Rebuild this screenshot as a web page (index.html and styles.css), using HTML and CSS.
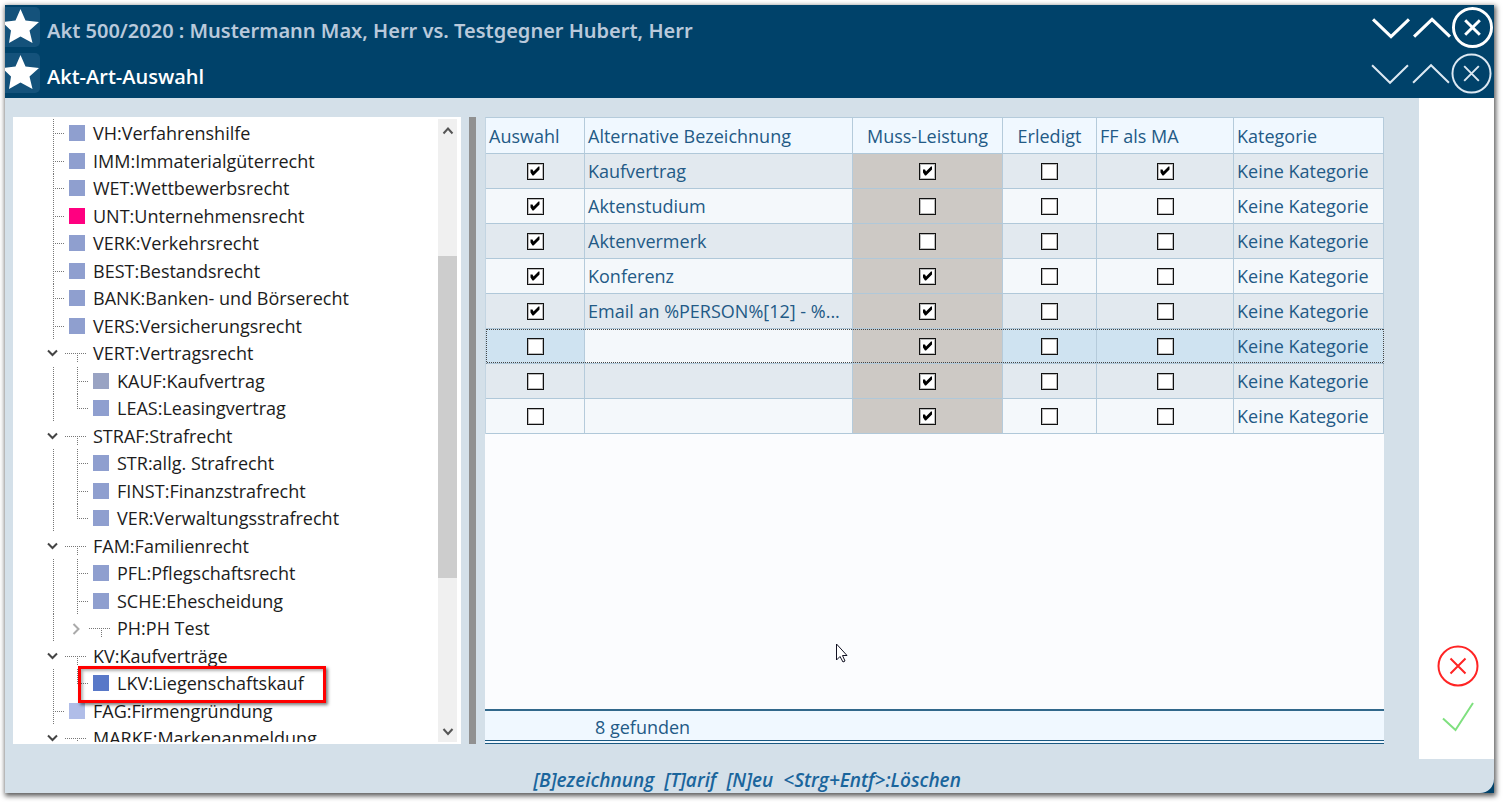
FILE: index.html
```html
<!DOCTYPE html>
<html lang="de">
<head>
<meta charset="utf-8">
<title>Akt-Art-Auswahl</title>
<link rel="stylesheet" href="styles.css">
</head>
<body>
<svg class="sprite" aria-hidden="true">
  <symbol id="star" viewBox="0 0 36 40"><path d="M15.500 2l5 11.500L34 15l-9.500 8.500L27.500 36l-12-6.500L4 36l2-12.500L-3 15l13.500-1.500z"/></symbol>
  <symbol id="down" viewBox="0 0 40 40"><path d="M3 12l17.500 17L38 12"/></symbol>
  <symbol id="up" viewBox="0 0 40 40"><path d="M3 29l17.500-17L38 29"/></symbol>
  <symbol id="close" viewBox="0 0 42 42"><circle cx="21" cy="21" r="19.500"/><path d="M13.500 13.500l15 15M28.500 13.500l-15 15"/></symbol>
  <symbol id="v" viewBox="0 0 24 28"><path d="M12.500 0v28"/></symbol>
  <symbol id="fork" viewBox="0 0 24 28"><path d="M12.500 0v28M14 14.500h12"/></symbol>
  <symbol id="end" viewBox="0 0 24 28"><path d="M12.500 0v15M14 14.500h12"/></symbol>
  <symbol id="tee" viewBox="0 0 24 28"><path d="M0 14.500h21M12.500 16v7"/></symbol>
  <symbol id="open" viewBox="0 0 24 28"><path d="M7 11.500l4.500 4.500L16 11.500"/></symbol>
  <symbol id="shut" viewBox="0 0 24 28"><path d="M8.500 10l5 5-5 5"/></symbol>
</svg>
<div class="window">
  <header class="titles">
    <div class="titlebar parent-title">
      <span class="badge"><svg><use href="#star"/></svg></span>
      <h2>Akt 500/2020 : Mustermann Max, Herr vs. Testgegner Hubert, Herr</h2>
      <button aria-label="Nach unten"><svg><use href="#down"/></svg></button>
      <button aria-label="Nach oben"><svg><use href="#up"/></svg></button>
      <button aria-label="Akt schließen"><svg><use href="#close"/></svg></button>
    </div>
    <div class="titlebar dialog-title">
      <span class="badge"><svg><use href="#star"/></svg></span>
      <h1>Akt-Art-Auswahl</h1>
      <button aria-label="Nach unten"><svg><use href="#down"/></svg></button>
      <button aria-label="Nach oben"><svg><use href="#up"/></svg></button>
      <button aria-label="Auswahl schließen"><svg><use href="#close"/></svg></button>
    </div>
  </header>
  <div class="content">
    <main class="work">
      <section class="tree-panel">
        <ul class="tree" role="tree">
          <li role="treeitem"><svg><use href="#fork"/></svg><i></i><span>VH:Verfahrenshilfe</span></li>
          <li role="treeitem"><svg><use href="#fork"/></svg><i></i><span>IMM:Immaterialgüterrecht</span></li>
          <li role="treeitem"><svg><use href="#fork"/></svg><i></i><span>WET:Wettbewerbsrecht</span></li>
          <li role="treeitem"><svg><use href="#fork"/></svg><i class="pink"></i><span>UNT:Unternehmensrecht</span></li>
          <li role="treeitem"><svg><use href="#fork"/></svg><i></i><span>VERK:Verkehrsrecht</span></li>
          <li role="treeitem"><svg><use href="#fork"/></svg><i></i><span>BEST:Bestandsrecht</span></li>
          <li role="treeitem"><svg><use href="#fork"/></svg><i></i><span>BANK:Banken- und Börserecht</span></li>
          <li role="treeitem"><svg><use href="#fork"/></svg><i></i><span>VERS:Versicherungsrecht</span></li>
          <li role="treeitem"><svg class="chevron"><use href="#open"/></svg><svg><use href="#tee"/></svg><span>VERT:Vertragsrecht</span></li>
          <li role="treeitem"><svg><use href="#v"/></svg><svg><use href="#fork"/></svg><i class="gray"></i><span>KAUF:Kaufvertrag</span></li>
          <li role="treeitem"><svg><use href="#v"/></svg><svg><use href="#end"/></svg><i></i><span>LEAS:Leasingvertrag</span></li>
          <li role="treeitem"><svg class="chevron"><use href="#open"/></svg><svg><use href="#tee"/></svg><span>STRAF:Strafrecht</span></li>
          <li role="treeitem"><svg><use href="#v"/></svg><svg><use href="#fork"/></svg><i></i><span>STR:allg. Strafrecht</span></li>
          <li role="treeitem"><svg><use href="#v"/></svg><svg><use href="#fork"/></svg><i></i><span>FINST:Finanzstrafrecht</span></li>
          <li role="treeitem"><svg><use href="#v"/></svg><svg><use href="#end"/></svg><i></i><span>VER:Verwaltungsstrafrecht</span></li>
          <li role="treeitem"><svg class="chevron"><use href="#open"/></svg><svg><use href="#tee"/></svg><span>FAM:Familienrecht</span></li>
          <li role="treeitem"><svg><use href="#v"/></svg><svg><use href="#fork"/></svg><i></i><span>PFL:Pflegschaftsrecht</span></li>
          <li role="treeitem"><svg><use href="#v"/></svg><svg><use href="#fork"/></svg><i></i><span>SCHE:Ehescheidung</span></li>
          <li role="treeitem"><svg><use href="#v"/></svg><svg class="chevron closed"><use href="#shut"/></svg><svg><use href="#tee"/></svg><span>PH:PH Test</span></li>
          <li role="treeitem"><svg class="chevron"><use href="#open"/></svg><svg><use href="#tee"/></svg><span>KV:Kaufverträge</span></li>
          <li role="treeitem" class="marked"><svg><use href="#v"/></svg><svg><use href="#end"/></svg><i class="strong"></i><span>LKV:Liegenschaftskauf</span></li>
          <li role="treeitem"><svg><use href="#fork"/></svg><i class="light"></i><span>FAG:Firmengründung</span></li>
          <li role="treeitem"><svg class="chevron"><use href="#open"/></svg><svg><use href="#tee"/></svg><span>MARKE:Markenanmeldung</span></li>
        </ul>
        <div class="scrollbar">
          <button aria-label="Nach oben blättern"><svg viewBox="0 0 19 24"><path d="M5.500 14.500l4.500-5 4.500 5"/></svg></button>
          <div class="track"><div class="thumb"></div></div>
          <button aria-label="Nach unten blättern"><svg viewBox="0 0 19 24"><path d="M5.500 11l4.500 5 4.500-5"/></svg></button>
        </div>
      </section>
      <div class="splitter"></div>
      <section class="grid-panel">
        <table>
          <colgroup><col class="c-select"><col><col class="c-must"><col class="c-done"><col class="c-ff"><col class="c-cat"></colgroup>
          <thead>
            <tr><th>Auswahl</th><th>Alternative Bezeichnung</th><th class="mid">Muss-Leistung</th><th class="mid">Erledigt</th><th>FF als MA</th><th>Kategorie</th></tr>
          </thead>
          <tbody>
            <tr><td class="mid"><input type="checkbox" aria-label="Auswahl" checked></td><td>Kaufvertrag</td><td class="mid must"><input type="checkbox" aria-label="Muss-Leistung" checked></td><td class="mid"><input type="checkbox" aria-label="Erledigt"></td><td class="mid"><input type="checkbox" aria-label="FF als MA" checked></td><td>Keine Kategorie</td></tr>
            <tr><td class="mid"><input type="checkbox" aria-label="Auswahl" checked></td><td>Aktenstudium</td><td class="mid must"><input type="checkbox" aria-label="Muss-Leistung"></td><td class="mid"><input type="checkbox" aria-label="Erledigt"></td><td class="mid"><input type="checkbox" aria-label="FF als MA"></td><td>Keine Kategorie</td></tr>
            <tr><td class="mid"><input type="checkbox" aria-label="Auswahl" checked></td><td>Aktenvermerk</td><td class="mid must"><input type="checkbox" aria-label="Muss-Leistung"></td><td class="mid"><input type="checkbox" aria-label="Erledigt"></td><td class="mid"><input type="checkbox" aria-label="FF als MA"></td><td>Keine Kategorie</td></tr>
            <tr><td class="mid"><input type="checkbox" aria-label="Auswahl" checked></td><td>Konferenz</td><td class="mid must"><input type="checkbox" aria-label="Muss-Leistung" checked></td><td class="mid"><input type="checkbox" aria-label="Erledigt"></td><td class="mid"><input type="checkbox" aria-label="FF als MA"></td><td>Keine Kategorie</td></tr>
            <tr><td class="mid"><input type="checkbox" aria-label="Auswahl" checked></td><td>Email an %PERSON%[12] - %...</td><td class="mid must"><input type="checkbox" aria-label="Muss-Leistung" checked></td><td class="mid"><input type="checkbox" aria-label="Erledigt"></td><td class="mid"><input type="checkbox" aria-label="FF als MA"></td><td>Keine Kategorie</td></tr>
            <tr class="current"><td class="mid"><input type="checkbox" aria-label="Auswahl"></td><td class="editing"></td><td class="mid must"><input type="checkbox" aria-label="Muss-Leistung" checked></td><td class="mid"><input type="checkbox" aria-label="Erledigt"></td><td class="mid"><input type="checkbox" aria-label="FF als MA"></td><td>Keine Kategorie</td></tr>
            <tr><td class="mid"><input type="checkbox" aria-label="Auswahl"></td><td></td><td class="mid must"><input type="checkbox" aria-label="Muss-Leistung" checked></td><td class="mid"><input type="checkbox" aria-label="Erledigt"></td><td class="mid"><input type="checkbox" aria-label="FF als MA"></td><td>Keine Kategorie</td></tr>
            <tr><td class="mid"><input type="checkbox" aria-label="Auswahl"></td><td></td><td class="mid must"><input type="checkbox" aria-label="Muss-Leistung" checked></td><td class="mid"><input type="checkbox" aria-label="Erledigt"></td><td class="mid"><input type="checkbox" aria-label="FF als MA"></td><td>Keine Kategorie</td></tr>
          </tbody>
        </table>
        <div class="found">8 gefunden</div>
        <svg class="pointer" viewBox="0 0 12 20"><path d="M.5 1v16l3.500-3.500 3 5.500 2-1-2.500-5.500h4.500z"/></svg>
      </section>
    </main>
    <aside class="actions">
      <button class="cancel" aria-label="Abbrechen"><svg><use href="#close"/></svg></button>
      <button class="confirm" aria-label="Übernehmen"><svg viewBox="0 0 42 42"><path d="M6 21.500l12.500 11.500L36 6"/></svg></button>
    </aside>
    <footer class="hints"><span>[B]ezeichnung</span><span>[T]arif</span><span>[N]eu</span><span>&lt;Strg+Entf&gt;:Löschen</span></footer>
  </div>
</div>
</body>
</html>
```
FILE: styles.css
```css
*, ::before, ::after { box-sizing: border-box; }

body {
  margin: 0;
  height: 100vh;
  padding: 5px 9px 9px 5px;
  overflow: hidden;
  background: #fff;
  font: 18px/24px "Open Sans", "Noto Sans", sans-serif;
  color: #1c1c1c;
}

.sprite { display: none; }

svg { display: block; flex: none; fill: none; overflow: visible; }

button {
  padding: 0;
  border: 0;
  background: none;
  color: inherit;
}

.window {
  display: flex;
  flex-direction: column;
  height: 100%;
  background: #00426a;
  box-shadow: 1px 2px 5px 1px rgba(0, 0, 0, .65);
}

.titles { flex: none; padding-bottom: 1px; color: #fff; }

.titlebar {
  display: flex;
  align-items: flex-start;
  height: 46px;
  padding: 2px 1px 0 0;
}

.titlebar h1,
.titlebar h2 {
  flex: 1;
  margin: 0 0 0 7px;
  padding-top: 12px;
  font-size: 20px;
  font-weight: 600;
  white-space: nowrap;
}

.parent-title h2 {
  color: #b9c9db;
  font-family: "Noto Sans", "Open Sans", sans-serif;
}

.badge {
  width: 35px;
  height: 40px;
  border-radius: 0 5px 5px 0;
  background: #14527b;
  overflow: hidden;
}

.badge svg { width: 36px; height: 40px; fill: #fff; }

.titlebar button svg { width: 41px; height: 41px; stroke: #fff; stroke-width: 3px; }
.dialog-title button svg { stroke: #dce8f2; stroke-width: 2px; }
.dialog-title { padding-right: 2px; }

.content {
  flex: 1;
  min-height: 0;
  display: grid;
  grid-template: minmax(0, 1fr) 34px / minmax(0, 1fr) 75px;
  background: #d4e0e9;
  border-bottom-right-radius: 14px;
}

.work {
  display: flex;
  padding: 19px 35px 15px 8px;
  min-height: 0;
}

.tree-panel {
  position: relative;
  flex: 0 0 448px;
  display: flex;
  padding: 2px 4px 2px 28px;
  background: #fff;
}

.tree {
  flex: 1;
  margin: 0;
  padding: 0;
  list-style: none;
  overflow: hidden;
}

.tree li {
  position: relative;
  display: flex;
  align-items: center;
  height: 28px;
  white-space: nowrap;
}

.tree li:nth-child(even) { height: 27px; }

.tree svg {
  width: 24px;
  height: 28px;
  stroke: #777;
  stroke-dasharray: 1 1;
}

.tree .chevron { stroke: #444; stroke-width: 2px; stroke-dasharray: none; }
.tree .closed { stroke: #aaa; }

.tree i {
  flex: none;
  width: 16px;
  height: 16px;
  margin: 0 4px;
  background: #8f9fcf;
}

.tree .pink { background: #ff0080; }
.tree .gray { background: #99a3c3; }
.tree .strong { background: #5878c8; }
.tree .light { background: #b0bde8; }

.tree span { margin-left: 4px; }

.marked::after {
  content: "";
  position: absolute;
  z-index: 1;
  top: -3px;
  left: 37px;
  width: 248px;
  height: 37px;
  border: 3px solid #f00;
  box-shadow: 2px 2px 3px rgba(0, 0, 0, .5), inset 2px 2px 3px rgba(0, 0, 0, .3);
}

.scrollbar {
  flex: none;
  display: flex;
  flex-direction: column;
  width: 19px;
  background: #f0f0f0;
}

.scrollbar svg { width: 19px; height: 24px; stroke: #555; stroke-width: 2px; }
.track { flex: 1; display: flex; flex-direction: column; }
.thumb { height: 56%; margin-top: 113px; background: #cdcdcd; }

.splitter { flex: none; width: 7px; margin: 0 9px 0 8px; background: #919191; }

.grid-panel {
  position: relative;
  flex: 1;
  min-width: 0;
  display: flex;
  flex-direction: column;
  justify-content: space-between;
  background: #fbfcfe;
  color: #235a86;
}

table {
  width: 100%;
  table-layout: fixed;
  border-spacing: 0;
  border-top: 1px solid #b5cbdb;
  border-left: 1px solid #c3d5e2;
}

.c-select { width: 99px; }
.c-must { width: 150px; }
.c-done { width: 94px; }
.c-ff { width: 137px; }
.c-cat { width: 150px; }

th, td {
  height: 35px;
  padding: 0 0 0 3px;
  border-right: 1px solid #b5cbdb;
  border-bottom: 1px solid #b0c8d9;
  font-weight: 400;
  text-align: left;
  white-space: nowrap;
  overflow: hidden;
}

th { height: 36px; background: #f0f8ff; }
td { background: #f4f8fb; }
tr:nth-child(odd) td { background: #e2e9ef; }
th.mid, td.mid { padding: 0; text-align: center; }

tbody tr .must.must { background-color: #cdc9c5; }

.current td { background-color: #cfe3f1; }
.current .editing { background-color: #f4f8fb; }

.current td,
.current .editing,
tbody .current .must.must {
  background-image:
    repeating-linear-gradient(90deg, #444 0 1px, transparent 1px 2px),
    repeating-linear-gradient(90deg, #444 0 1px, transparent 1px 2px);
  background-size: 100% 1px;
  background-position: 0 0, 0 100%;
  background-repeat: no-repeat;
}

.current td:first-child { border-left: 1px dotted #444; }
.current td:last-child { border-right: 1px dotted #444; }

input[type="checkbox"] {
  appearance: none;
  display: block;
  width: 17px;
  height: 17px;
  margin: 0 auto;
  border: 1px solid #111;
  background: #fff;
  box-shadow: inset 0 0 0 1px #bbb;
}

input:checked::before {
  content: "";
  display: block;
  width: 15px;
  height: 15px;
  background: #000;
  clip-path: polygon(3px 6px, 5px 6px, 6px 8px, 11px 3px, 12px 3px, 12px 6px, 6px 12px, 5px 12px, 3px 9px);
}

.found {
  height: 35px;
  padding: 4px 0 0 110px;
  border-top: 2px solid #31688b;
  border-bottom: 4px double #1c5a82;
  background: #f0f8ff;
}

.pointer {
  position: absolute;
  left: 39%;
  bottom: 81px;
  width: 12px;
  height: 20px;
  fill: #fff;
  stroke: #112;
}

.actions {
  display: flex;
  flex-direction: column;
  align-items: center;
  justify-content: flex-end;
  gap: 10px;
  padding: 0 0 20px 3px;
  background: #fff;
}

.actions svg { width: 42px; height: 42px; stroke-width: 2px; }
.cancel svg { stroke: #ff2424; }
.confirm svg { stroke: #7fe07f; }

.hints {
  grid-column: 1 / -1;
  display: flex;
  justify-content: center;
  gap: 10px;
  padding: 9px 5px 0 0;
  color: #1a659c;
  font-size: 19px;
  font-style: italic;
  font-weight: 600;
}
```
